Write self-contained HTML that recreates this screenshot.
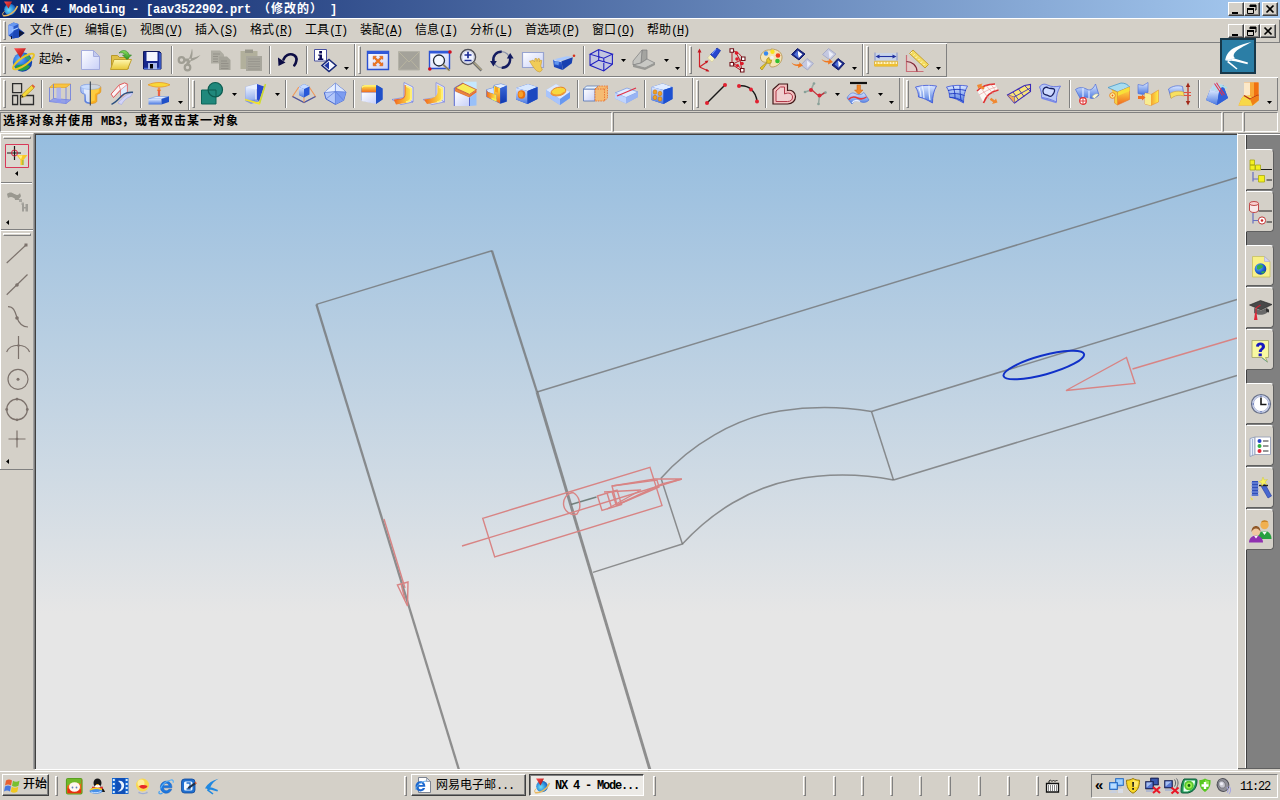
<!DOCTYPE html>
<html lang="zh-CN"><head><meta charset="utf-8"><title>NX 4 - Modeling</title>
<style>
*{box-sizing:border-box;margin:0;padding:0}
html,body{width:1280px;height:800px;overflow:hidden;background:#d4d0c8}
body{position:relative;font-family:"Liberation Sans","Noto Sans CJK SC",sans-serif;font-size:12px;color:#000;line-height:12px}
.a{position:absolute}
svg{position:absolute;overflow:visible}
.title{left:0;top:0;width:1280px;height:18px;background:linear-gradient(90deg,#0a246a,#a6caf0)}
.ttxt{left:20px;top:3px;height:14px;line-height:14px;color:#fff;font-weight:bold;font-size:12px;white-space:pre;font-family:"Liberation Mono","Noto Sans CJK SC",monospace;letter-spacing:-0.2px}
.hl{background:#fff}.sh{background:#808080}.dk{background:#404040}
.grp{border:1px solid;border-color:#fff #808080 #808080 #fff}
.gripv{width:3px;border:1px solid;border-color:#fff #808080 #808080 #fff}
.griph{height:3px;border:1px solid;border-color:#fff #808080 #808080 #fff}
.sepv{width:2px;border-left:1px solid #808080;border-right:1px solid #fff}
.btn{background:#d4d0c8;border:1px solid;border-color:#fff #404040 #404040 #fff;box-shadow:inset -1px -1px 0 #808080,inset 1px 1px 0 #d4d0c8}
.menu span.m{position:absolute;top:24px;height:13px;line-height:13px;white-space:pre}
.menu u{text-decoration:underline}
.lat{font-family:"Liberation Mono",monospace;letter-spacing:-1.2px;font-size:12px}
.sunk{border:1px solid;border-color:#808080 #fff #fff #808080}
.stat{font-weight:bold;font-family:"Liberation Mono","Noto Sans CJK SC",monospace;white-space:pre}
.canvas{left:35px;top:134px;width:1202px;height:635px;border-left:1px solid #404040;border-top:1px solid #404040;background:linear-gradient(180deg,#96bddf 0,#e6e6e6 478px,#e6e6e6 100%)}
.tab{left:1246px;width:28px;height:41px;background:#d4d0c8;border-radius:0 4px 4px 0;border:1px solid;border-color:#fff #606060 #606060 #d4d0c8}
.tbtn{height:22px;top:774px;font-size:12px;line-height:18px;white-space:pre}
</style></head>
<body>
<div class="a title" style=""></div>
<svg style="left:2px;top:1px" width="16" height="16" viewBox="0 0 16 16"><circle cx="8" cy="8.500" r="5.800" fill="url(#gCy)"/>
<path d="M1 14.500c5 1 12-3 14.500-9.500" fill="none" stroke="#e8b860" stroke-width="1.500"/><path d="M1 14.500c-1-1.500 0-3 1.500-4" fill="none" stroke="#e8b860" stroke-width="1"/>
<path d="M2 .5h8l-3.500 7z" fill="url(#gRd)"/></svg>
<div class="a ttxt" style="">NX 4 - Modeling - [aav3522902.prt <span style="letter-spacing:1px">（修改的）</span> ]</div>
<div class="a btn" style="left:1228px;top:2px;width:16px;height:14px"><svg style="left:0;top:0" width="14" height="12" viewBox="0 0 14 12"><path d="M3 9h6v2H3z" fill="#000"/></svg></div>
<div class="a btn" style="left:1244px;top:2px;width:16px;height:14px"><svg style="left:0;top:0" width="14" height="12" viewBox="0 0 14 12"><path d="M5 2h6v5h-1M5 2v2M5 3h6" stroke="#000" stroke-width="1" fill="none"/><path d="M5 2h6v2H5z" fill="#000"/><path d="M2.5 5.5h6v5h-6z" fill="none" stroke="#000"/><path d="M2 5h7v2H2z" fill="#000"/></svg></div>
<div class="a btn" style="left:1262px;top:2px;width:16px;height:14px"><svg style="left:0;top:0" width="14" height="12" viewBox="0 0 14 12"><path d="M3.5 2.5l7 7M10.5 2.5l-7 7" stroke="#000" stroke-width="1.7" fill="none"/></svg></div>
<div class="a hl" style="left:0;top:18px;width:1280px;height:1px"></div>
<div class="a gripv" style="left:3px;top:21px;height:19px"></div>
<svg style="left:8px;top:22px" width="17" height="17" viewBox="0 0 17 17"><path d="M0.500 3l5-2.500l5 1.500v4l6 5l-6 4.500l-6 1l-4-3z" fill="#2858c8"/><path d="M0.500 3l5-2.500l5 1.500l-5 2.500z" fill="#6898f0"/><path d="M.5 3l5 1.500v5l-5 4z" fill="#88b0ff"/><path d="M5.500 9.500l5-3l6 4.500l-6 4.500l-6 1z" fill="#1c48b8"/><path d="M4 8.500l6-2.500" stroke="#a8d0ff" stroke-width="1.200"/><path d="M11 8l5.500 3l-5.500 4z" fill="#101838"/><path d="M3.500 14v3" stroke="#101838" stroke-width="1"/></svg>
<div class="menu"><span class="m" style="left:30px">文件<span class="lat">(<u>F</u>)</span></span><span class="m" style="left:85px">编辑<span class="lat">(<u>E</u>)</span></span><span class="m" style="left:140px">视图<span class="lat">(<u>V</u>)</span></span><span class="m" style="left:195px">插入<span class="lat">(<u>S</u>)</span></span><span class="m" style="left:250px">格式<span class="lat">(<u>R</u>)</span></span><span class="m" style="left:305px">工具<span class="lat">(<u>T</u>)</span></span><span class="m" style="left:360px">装配<span class="lat">(<u>A</u>)</span></span><span class="m" style="left:415px">信息<span class="lat">(<u>I</u>)</span></span><span class="m" style="left:470px">分析<span class="lat">(<u>L</u>)</span></span><span class="m" style="left:525px">首选项<span class="lat">(<u>P</u>)</span></span><span class="m" style="left:592px">窗口<span class="lat">(<u>O</u>)</span></span><span class="m" style="left:647px">帮助<span class="lat">(<u>H</u>)</span></span></div>
<div class="a btn" style="left:1228px;top:24px;width:16px;height:14px"><svg style="left:0;top:0" width="14" height="12" viewBox="0 0 14 12"><path d="M3 9h6v2H3z" fill="#000"/></svg></div>
<div class="a btn" style="left:1244px;top:24px;width:16px;height:14px"><svg style="left:0;top:0" width="14" height="12" viewBox="0 0 14 12"><path d="M5 2h6v5h-1M5 2v2M5 3h6" stroke="#000" stroke-width="1" fill="none"/><path d="M5 2h6v2H5z" fill="#000"/><path d="M2.5 5.5h6v5h-6z" fill="none" stroke="#000"/><path d="M2 5h7v2H2z" fill="#000"/></svg></div>
<div class="a btn" style="left:1260px;top:24px;width:16px;height:14px"><svg style="left:0;top:0" width="14" height="12" viewBox="0 0 14 12"><path d="M3.5 2.5l7 7M10.5 2.5l-7 7" stroke="#000" stroke-width="1.7" fill="none"/></svg></div>
<div class="a sh" style="left:1279px;top:20px;width:1px;height:23px"></div>
<div class="a sh" style="left:0;top:42px;width:1280px;height:1px"></div>
<div class="a hl" style="left:0;top:43px;width:947px;height:1px"></div>
<div class="a " style="left:1220px;top:38px;width:36px;height:36px;background:#2b7ea6;border:2px solid #17384a"><svg style="left:0px;top:0px" width="32" height="32" viewBox="0 0 32 32"><path d="M29.500 2C22 6 15 9.500 12.500 13C11 15.500 11.500 17 13 18C10 19.500 6 20.500 3.300 20C3.800 15 7.500 10 13 7.500C18 5 24 3 29.500 2z" fill="#fff"/>
<path d="M5.500 19.500C9 18 12 18 14 19L26 22.500L25.500 24.300L13 21.300C10 20.500 8 20.500 6 21.500z" fill="#fff"/><path d="M6.500 21L15.500 28.500L14.500 29.500L5 22z" fill="#fff"/><path d="M3.300 20c2 .5 5 0 7-1" stroke="#d0e8f8" stroke-width="1" fill="none"/></svg></div>
<div class="a sh" style="left:354px;top:44px;width:1px;height:32px"></div><div class="a hl" style="left:0px;top:44px;width:1px;height:32px"></div>
<div class="a gripv" style="left:3px;top:46px;height:28px"></div>
<div class="a sh" style="left:685px;top:44px;width:1px;height:32px"></div><div class="a hl" style="left:355px;top:44px;width:1px;height:32px"></div>
<div class="a gripv" style="left:358px;top:46px;height:28px"></div>
<div class="a sh" style="left:862px;top:44px;width:1px;height:32px"></div><div class="a hl" style="left:686px;top:44px;width:1px;height:32px"></div>
<div class="a gripv" style="left:689px;top:46px;height:28px"></div>
<div class="a sh" style="left:946px;top:44px;width:1px;height:32px"></div><div class="a hl" style="left:863px;top:44px;width:1px;height:32px"></div>
<div class="a gripv" style="left:866px;top:46px;height:28px"></div>
<div class="a sh" style="left:0;top:76px;width:947px;height:1px"></div>
<div class="a sh" style="left:947px;top:76px;width:333px;height:1px;background:#d4d0c8"></div>
<div class="a hl" style="left:0;top:77px;width:1278px;height:1px"></div>
<div class="a sepv" style="left:171px;top:46px;height:28px"></div>
<div class="a sepv" style="left:269px;top:46px;height:28px"></div>
<div class="a sepv" style="left:306px;top:46px;height:28px"></div>
<div class="a sepv" style="left:583px;top:46px;height:28px"></div>
<div class="a sh" style="left:188px;top:78px;width:1px;height:32px"></div><div class="a hl" style="left:0px;top:78px;width:1px;height:32px"></div>
<div class="a gripv" style="left:3px;top:80px;height:28px"></div>
<div class="a sh" style="left:692px;top:78px;width:1px;height:32px"></div><div class="a hl" style="left:189px;top:78px;width:1px;height:32px"></div>
<div class="a gripv" style="left:192px;top:80px;height:28px"></div>
<div class="a sh" style="left:899px;top:78px;width:1px;height:32px"></div><div class="a hl" style="left:693px;top:78px;width:1px;height:32px"></div>
<div class="a gripv" style="left:696px;top:80px;height:28px"></div>
<div class="a sh" style="left:1277px;top:78px;width:1px;height:32px"></div><div class="a hl" style="left:903px;top:78px;width:1px;height:32px"></div>
<div class="a gripv" style="left:906px;top:80px;height:28px"></div>
<div class="a sh" style="left:0;top:110px;width:1278px;height:1px"></div>
<div class="a sepv" style="left:41px;top:80px;height:28px"></div>
<div class="a sepv" style="left:140px;top:80px;height:28px"></div>
<div class="a sepv" style="left:285px;top:80px;height:28px"></div>
<div class="a sepv" style="left:353px;top:80px;height:28px"></div>
<div class="a sepv" style="left:577px;top:80px;height:28px"></div>
<div class="a sepv" style="left:644px;top:80px;height:28px"></div>
<div class="a sepv" style="left:765px;top:80px;height:28px"></div>
<div class="a sepv" style="left:1069px;top:80px;height:28px"></div>
<div class="a sepv" style="left:1198px;top:80px;height:28px"></div>
<div class="a sunk" style="left:0;top:112px;width:612px;height:20px"></div>
<div class="a sunk" style="left:613px;top:112px;width:609px;height:20px"></div>
<div class="a sunk" style="left:1223px;top:112px;width:20px;height:20px"></div>
<div class="a sunk" style="left:1244px;top:112px;width:34px;height:20px"></div>
<div class="a stat" style="left:3px;top:116px;height:12px;letter-spacing:1px">选择对象并使用<span style="letter-spacing:-0.2px"> MB3</span>，或者双击某一对象</div>
<div class="a sh" style="left:33px;top:134px;width:1px;height:635px;background:#a0a0a0"></div>
<div class="a sh" style="left:34px;top:133px;width:1px;height:636px"></div>
<div class="a sh" style="left:34px;top:133px;width:1203px;height:1px"></div>
<div class="a hl" style="left:0;top:133px;width:33px;height:1px"></div>
<div class="a griph" style="left:3px;top:136px;width:28px"></div>
<div class="a sh" style="left:1px;top:182px;width:31px;height:1px"></div>
<div class="a hl" style="left:1px;top:183px;width:31px;height:1px"></div>
<div class="a sh" style="left:0px;top:229px;width:33px;height:1px"></div>
<div class="a hl" style="left:0px;top:230px;width:33px;height:1px"></div>
<div class="a griph" style="left:3px;top:233px;width:28px"></div>
<div class="a sh" style="left:0px;top:469px;width:33px;height:1px"></div>
<div class="a hl" style="left:0;top:20px;width:1px;height:22px"></div>
<div class="a hl" style="left:0;top:134px;width:1px;height:335px"></div>
<svg style="left:15px;top:171px" width="3" height="5" viewBox="0 0 3 5"><path d="M3 0v5L0 2.5z" fill="#000"/></svg>
<svg style="left:6px;top:220px" width="3" height="5" viewBox="0 0 3 5"><path d="M3 0v5L0 2.5z" fill="#000"/></svg>
<svg style="left:6px;top:459px" width="3" height="5" viewBox="0 0 3 5"><path d="M3 0v5L0 2.5z" fill="#000"/></svg>
<div class="a canvas" style=""><svg style="left:-36px;top:-135px" width="1280" height="800" viewBox="0 0 1280 800" fill="none" stroke-linecap="butt">
<g stroke="#6e6e6e" stroke-opacity=".74" stroke-width="1.5">
<path d="M316.4 304.4L491.9 250.7"/>
<path d="M537 392L1237 177.5"/>
<path d="M871.5 411.5L1237 299.5"/>
<path d="M893.5 480L1237 375.5"/>
<path d="M871.5 411.5L893.5 480"/>
<path d="M661 478.3L682.4 544L593 572.4"/>
<path d="M661 478.3C690 445 735 418 780 411 C812 406 845 407 871.5 411.5"/>
<path d="M682.4 544C712 512 750 488 792 480 C828 473 862 474 893.5 480"/>
<path d="M571 504.5L596.500 497" stroke="#506058"/>
</g>
<g stroke="#6e6e6e" stroke-opacity=".74">
<path d="M316.4 304.4L459 770" stroke-width="2.300"/>
<path d="M491.900 250.700L537 392" stroke-width="2.300"/>
<path d="M537 392L650 770" stroke-width="2.900"/>
</g>
<g stroke="#d88484" stroke-width="1.400">
<path d="M482.700 518.300L650 467.400L662 505.600L494.700 557z"/>
<path d="M462 546L681.800 479"/>
<path d="M573 492.500a10.500 11 0 1 0 4 21.500c3-4 3.500-9 2-14c-1-3.500-3.500-6-6-7.500z"/>
<path d="M597.500 496L617 490L621.500 504.500L602 510.500z"/>
<path d="M607 493L611.500 507.500M612 491.500L616.500 506"/>
<path d="M612 486L657 480L659 487L617 505z"/>
<path d="M604 492L641 490L607 509"/>
<path d="M617 505L662 484L681.800 479L655 479L612 486"/>
<path d="M384 519L405 588"/>
<path d="M397.400 585L408 582L407.500 606z"/>
<path d="M401 583.500L405 600"/>
<path d="M1237 338L1132.500 369"/>
<path d="M1126.500 357.500L1135 383.500L1066 390.500z"/>
</g>
<ellipse cx="1043.800" cy="365" rx="41.700" ry="9.500" transform="rotate(-15.300 1043.800 365)" stroke="#1030c8" stroke-width="2"/>
</svg></div>
<div class="a hl" style="left:1237px;top:134px;width:1px;height:635px"></div>
<div class="a hl" style="left:35px;top:769px;width:1203px;height:1px"></div>
<div class="a " style="left:1246px;top:135px;width:34px;height:634px;background:#808080;border-left:1px solid #404040;border-bottom:1px solid #606060"></div>
<div class="a hl" style="left:1245px;top:135px;width:1px;height:633px"></div>
<div class="a sh" style="left:1238px;top:133px;width:42px;height:1px"></div>
<div class="a hl" style="left:1238px;top:134px;width:42px;height:1px"></div>
<div class="a sh" style="left:1238px;top:768px;width:8px;height:1px;background:#606060"></div>
<div class="a tab" style="top:149px"><svg style="left:1px;top:8px" width="24" height="24" viewBox="0 0 24 24"><g fill="#f4f020" stroke="#a8a810" stroke-width=".8"><path d="M2 2h4.500v5h-4.500zM2 7h5v5h-5zM7.500 7h5v5h-5zM10.500 17.500h6v6.500h-6z"/></g><path d="M13 11.500h11M18.500 22h5.500" stroke="#202020" stroke-width="1.200"/><path d="M5 14v9.500M5 21h5" stroke="#6870c0" stroke-width="1.200" fill="none"/></svg></div>
<div class="a tab" style="top:191px"><svg style="left:1px;top:8px" width="24" height="24" viewBox="0 0 24 24"><path d="M1.500 3.500v6.500c0 1.500 2 2.500 4.500 2.500s4.500-1 4.500-2.500v-6.500z" fill="#f8e8e8" stroke="#c04848" stroke-width="1"/><ellipse cx="6" cy="3.500" rx="4.500" ry="2" fill="#f8d0d0" stroke="#c04848" stroke-width="1"/>
<path d="M10.500 11h13.500M18.500 22h5.500" stroke="#202020" stroke-width="1.200"/><path d="M5 13v10.500M5 20.500h5" stroke="#6870c0" stroke-width="1.200" fill="none"/><circle cx="14" cy="20.500" r="3.600" fill="#fff" stroke="#c03838" stroke-width="1"/><circle cx="14" cy="20.500" r="1.300" fill="#d02828"/></svg></div>
<div class="a tab" style="top:245px"><svg style="left:1px;top:8px" width="24" height="24" viewBox="0 0 24 24"><path d="M4.500 2.500h12l5.500 5v15.500h-17.500z" fill="#f8f088" stroke="#c8c060" stroke-width=".8"/><path d="M16.500 2.500v5h5.500z" fill="#d0d0f8" stroke="#a8a8d8" stroke-width=".6"/>
<circle cx="12.500" cy="15" r="5.800" fill="url(#gGl)"/><path d="M9 12c2-2 5-2 6 0c0 2-2 2-3 3s-2 1-3 0z" fill="#38b048"/><path d="M13 18c1-1 3-1 4-.5c-1 2-3 3-4 .5z" fill="#38b048"/></svg></div>
<div class="a tab" style="top:287px"><svg style="left:1px;top:8px" width="24" height="24" viewBox="0 0 24 24"><path d="M1.500 9l11-4.500l11.500 4l-11 5.500z" fill="#484848" stroke="#202020" stroke-width=".6"/><path d="M6 12v5c3 2.500 10 2.500 13.500-.5v-5l-6.500 3z" fill="#686868"/><path d="M12.500 9l-4.500 3v6" fill="none" stroke="#d02030" stroke-width="1.100"/><path d="M7 17l-1 7h3.500l-1-7z" fill="#e02838"/><path d="M18 12.500l3 1v3l-3-1z" fill="#303030"/></svg></div>
<div class="a tab" style="top:329px"><svg style="left:1px;top:8px" width="24" height="24" viewBox="0 0 24 24"><path d="M4 2.500h16.500v17h-3l2 4.500l-5.500-4.500h-10z" fill="#f8f8a0" stroke="#a8a870" stroke-width=".9"/><path d="M14 20l5.500 4" stroke="#60a090" stroke-width=".8"/>
<path d="M8 8.500c0-2.500 2-4 4.500-4s4.500 1.500 4.500 4c0 3-3.200 3-3.200 5.500h-3c0-3.500 3-3.500 3-5.500c0-.8-.5-1.300-1.400-1.300s-1.500.6-1.500 1.500zM10.600 15.500h3.200v2.800h-3.200z" fill="#1818c0"/></svg></div>
<div class="a tab" style="top:383px"><svg style="left:1px;top:8px" width="24" height="24" viewBox="0 0 24 24"><circle cx="13" cy="12" r="9.500" fill="#d0d8f0" stroke="#687088" stroke-width="1.200"/><circle cx="13" cy="12" r="7.500" fill="#fff" stroke="#a8b0d0" stroke-width=".8"/><path d="M13 5.500v7h5.500" fill="none" stroke="#181818" stroke-width="1.600"/><path d="M13 3.500v1.500M13 19v1.500M4.500 12h1.500M20 12h1.500" stroke="#4860a8" stroke-width="1"/></svg></div>
<div class="a tab" style="top:425px"><svg style="left:1px;top:8px" width="24" height="24" viewBox="0 0 24 24"><path d="M2 4.500l5-1.500v17.500l-5 2z" fill="#e8eef8" stroke="#8898b8" stroke-width=".8"/><path d="M7 3h15.500v17.500h-15.500z" fill="#fff" stroke="#98a0b8" stroke-width=".9"/><path d="M4.500 5v16" stroke="#a8b8d8" stroke-width="1"/>
<circle cx="11.500" cy="7" r="2" fill="#2848c8"/><circle cx="11.500" cy="12" r="2" fill="#30b040"/><circle cx="11.500" cy="17" r="2" fill="#e02838"/><path d="M15 7h5.500M15 12h5.500M15 17h5.500" stroke="#303030" stroke-width="1.100"/></svg></div>
<div class="a tab" style="top:467px"><svg style="left:1px;top:8px" width="24" height="24" viewBox="0 0 24 24"><path d="M4 5h6v15h-6z" fill="#3050b8"/><path d="M3 7h8M3 10h8M3 13h8M3 16h8M3 19h8" stroke="#88a0e8" stroke-width="1.200"/><path d="M2 21l3 2l-1 1.500z" fill="#f0e038"/>
<path d="M13 10l4-2l6.500 12l-3.500 2z" fill="#4868d0" stroke="#2038a0" stroke-width=".6"/><path d="M11 9.500h9" stroke="#202020" stroke-width="1.400"/>
<path d="M15 1l1.200 3l3.300-.5l-2.300 2.500l1.800 2.800l-3.200-1l-2 2.500l-.2-3.300l-3.100-1.200l3.100-1.200z" fill="#f8f060" stroke="#c8c030" stroke-width=".4"/></svg></div>
<div class="a tab" style="top:509px"><svg style="left:1px;top:8px" width="24" height="24" viewBox="0 0 24 24"><circle cx="16.500" cy="7" r="4.200" fill="#f0b050"/><path d="M13 4.500c1-3 6-3 7.500 0c-2-1-5-1-7.500 0z" fill="#c88020"/><path d="M9.500 21c0-5 3-8 7-8s7 3 7 8z" fill="#28a040"/><path d="M14 13.500l2.500 3.500l2.500-3.500z" fill="#f8f8f8"/>
<circle cx="8" cy="14" r="4" fill="#f0c8a0"/><path d="M3.500 14c0-4 2-6 4.500-6s4.500 2 4.500 6c-1-2-2.500-3.500-4.500-3.500s-3.500 1.500-4.500 3.500z" fill="#905828"/><path d="M1 24.500c0-4 3-7 7-7s7 3 7 7z" fill="#9030b0"/><path d="M6 17.800l2 2.800l2-2.800z" fill="#f8f8f8"/></svg></div>
<div class="a hl" style="left:0;top:771px;width:1280px;height:1px"></div>
<div class="a btn tbtn" style="left:2px;width:47px"><svg style="left:2px;top:2px" width="16" height="16" viewBox="0 0 16 16"><path d="M1 3.500c2-1.500 4-1.500 6 0l-1 5c-2-1.500-4-1.500-6 0z" fill="#e86030"/><path d="M8 3.800c2 1.300 4 1.300 6.500 0l-1 5c-2.500 1.300-4.500 1.300-6.500 0z" fill="#78c030"/><path d="M0 9.500c2-1.500 4-1.500 6 0l-1 5c-2-1.500-4-1.500-6 0z" fill="#4878e0"/><path d="M6.800 9.800c2 1.300 4 1.300 6.500 0l-1 5c-2.500 1.300-4.500 1.300-6.500 0z" fill="#f0c820"/></svg><span class="a" style="left:20px;top:3px;line-height:13px;font-weight:500">开始</span></div>
<div class="a gripv" style="left:55px;top:776px;height:20px"></div>
<svg style="left:66px;top:778px" width="16" height="16" viewBox="0 0 16 16"><rect x=".5" y=".5" width="15.500" height="15.500" rx="1.500" fill="#f06818" stroke="#58a020" stroke-width="1.200"/><path d="M1 1h14v5c-5-2-9-2-14 2z" fill="#70b828"/><path d="M1.500 10c3 2 10 3 13.500 1v4h-13.500z" fill="#e83010"/>
<ellipse cx="8.500" cy="9" rx="5.500" ry="4.800" fill="#fff8f0"/><circle cx="6.500" cy="9.500" r=".9" fill="#6080c0"/><circle cx="10.500" cy="9.500" r=".9" fill="#6080c0"/></svg>
<svg style="left:89px;top:778px" width="16" height="16" viewBox="0 0 16 16"><ellipse cx="8.500" cy="5" rx="4" ry="4.500" fill="#181818"/><path d="M4 9c-2 2-3 4-3 5h15c0-1-2-4-4-5.500z" fill="#181818"/><ellipse cx="8.500" cy="10" rx="3" ry="3.500" fill="#fff"/><path d="M3.500 8.500c3 1.500 7 1.500 10 0l.5 2c-3 1.500-8 1.500-11 0z" fill="#e02828"/><path d="M7 6h3l-1.500 1.500z" fill="#f8b020"/>
<ellipse cx="7" cy="13" rx="6.500" ry="2.800" fill="#4890e8"/><path d="M1 12c3-2 8-2 12-.5" stroke="#f8d020" stroke-width="1.500" fill="none"/><path d="M2 14c3 1 7 1 10-.5" stroke="#c8e0ff" stroke-width="1" fill="none"/></svg>
<svg style="left:112px;top:778px" width="16" height="16" viewBox="0 0 16 16"><path d="M0 0h16.500v16h-16.500z" fill="#1868d0"/><path d="M3.500 0h9.500v16h-9.500z" fill="#1050b8"/><g fill="#d8ecff"><path d="M.8 1h2v2h-2zM.8 5h2v2h-2zM.8 9h2v2h-2zM.8 13h2v2h-2zM13.700 1h2v2h-2zM13.700 5h2v2h-2zM13.700 9h2v2h-2zM13.700 13h2v2h-2z"/></g>
<path d="M6 3c4-1.500 7 2 6 6c-.8 3-3.500 5-6.500 4.500c3-1.500 4.500-4 3.800-6.500c-.4-1.500-1.500-2.800-3.300-4z" fill="#e8f4ff"/></svg>
<svg style="left:135px;top:778px" width="16" height="16" viewBox="0 0 16 16"><circle cx="7.500" cy="7" r="6.500" fill="#f8d850"/><circle cx="6" cy="5" r="3.500" fill="#fff4b0" opacity=".8"/><path d="M4 8c2-1.500 6-1.500 8.500 0c-1 3.500-7 3.500-8.500 0z" fill="#e82828"/><path d="M4 13.500c2 2 6 2 8 0l1 1.500c-3 1.500-7 1.500-10 0z" fill="#88a0d8" opacity=".7"/></svg>
<svg style="left:158px;top:778px" width="16" height="16" viewBox="0 0 16 16"><path d="M13.900 9.800H5.400c.2 1.800 1.400 2.900 3 2.900c1.100 0 2-.5 2.600-1.400h2.700c-.9 2.400-2.900 3.900-5.400 3.900c-3.400 0-5.900-2.500-5.900-6s2.500-6 5.900-6c3.600 0 5.800 2.800 5.600 6.600zM5.500 7.700h5.500c-.3-1.500-1.400-2.400-2.800-2.400s-2.400.9-2.700 2.400z" fill="#1c78e0" fill-rule="evenodd" stroke="#1458b8" stroke-width=".5"/><path d="M1.500 13c-1.500 2.500 0 3.500 3 2.200" stroke="#48a0f0" stroke-width="1.300" fill="none"/><path d="M2.500 10.500c2-4.500 6-7.500 10.500-8.500c2-.3 2.800.8 2 2.700" stroke="#58b0f8" stroke-width="1.200" fill="none"/></svg>
<svg style="left:181px;top:778px" width="16" height="16" viewBox="0 0 16 16"><rect x=".5" y="1" width="13.500" height="14" rx="3" fill="#2070d0" stroke="#104898" stroke-width=".8"/><rect x="3" y="3.500" width="8.500" height="9" rx="1.500" fill="#f0f8ff"/><path d="M5.500 5h3.500v6h-3.500" fill="none" stroke="#2070d0" stroke-width="1.300"/><path d="M7 9l6.500-4.500l1.500 1.500l-6.500 4.500l-2 .3z" fill="#203048"/><path d="M13.500 4.500l1-.8l1.500 1.500l-1 .8z" fill="#e85828"/></svg>
<svg style="left:204px;top:778px" width="16" height="16" viewBox="0 0 16 16"><path d="M14.500 .8C8.500 2.500 3.500 5.500 1 10.500c2.500.3 4.500-.3 5.500-1.500C7.500 6 10.500 3 14.500 .8z" fill="#2088e0"/><path d="M2.500 10c2-1 4.500-1 6 -.2l5.500 2.200l-.6 1.500l-5.400-1.600c-1.500-.4-3-.3-4 .3z" fill="#2088e0"/><path d="M4 11.300l5.500 4.200l-1 1l-5.500-4z" fill="#2088e0"/></svg>
<div class="a gripv" style="left:404px;top:776px;height:20px"></div>
<div class="a btn tbtn" style="left:411px;width:115px"><svg style="left:3px;top:2px" width="16" height="16" viewBox="0 0 16 16"><path d="M3.500 .5h8l4 4v11h-12z" fill="#fff" stroke="#707888" stroke-width=".9"/><path d="M11.500 .5v4h4z" fill="#d0d8e8" stroke="#707888" stroke-width=".6"/>
<g transform="translate(-1.500 1.500) scale(.85)"><path d="M13.900 9.800H5.400c.2 1.800 1.400 2.900 3 2.900c1.100 0 2-.5 2.600-1.400h2.700c-.9 2.400-2.900 3.900-5.400 3.900c-3.400 0-5.900-2.500-5.900-6s2.500-6 5.900-6c3.600 0 5.800 2.800 5.600 6.600zM5.500 7.700h5.500c-.3-1.500-1.400-2.400-2.800-2.400s-2.400.9-2.700 2.400z" fill="#1c68d0" fill-rule="evenodd"/></g><path d="M.5 12.500c2-5 6-8 11-8.500" stroke="#58a8f0" stroke-width="1" fill="none"/></svg><span class="a" style="left:24px;top:4px;line-height:13px">网易电子邮<span class="lat">...</span></span></div>
<div class="a tbtn" style="left:529px;width:115px;border:1px solid;border-color:#404040 #fff #fff #404040;box-shadow:inset 1px 1px 0 #808080;background:#eceae6"><svg style="left:4px;top:3px" width="16" height="16" viewBox="0 0 16 16"><circle cx="8" cy="8.500" r="5.800" fill="url(#gCy)"/>
<path d="M1 14.500c5 1 12-3 14.500-9.500" fill="none" stroke="#e8b860" stroke-width="1.500"/><path d="M1 14.500c-1-1.500 0-3 1.500-4" fill="none" stroke="#e8b860" stroke-width="1"/>
<path d="M2 .5h8l-3.500 7z" fill="url(#gRd)"/></svg><span class="a lat" style="left:25px;top:5px;line-height:13px;font-weight:bold">NX 4 - Mode...</span></div>
<div class="a gripv" style="left:653px;top:776px;height:20px"></div>
<div class="a gripv" style="left:803px;top:776px;height:20px"></div>
<div class="a gripv" style="left:833px;top:776px;height:20px"></div>
<div class="a gripv" style="left:861px;top:776px;height:20px"></div>
<div class="a gripv" style="left:890px;top:776px;height:20px"></div>
<div class="a gripv" style="left:919px;top:776px;height:20px"></div>
<div class="a gripv" style="left:948px;top:776px;height:20px"></div>
<div class="a gripv" style="left:978px;top:776px;height:20px"></div>
<div class="a gripv" style="left:1007px;top:776px;height:20px"></div>
<div class="a gripv" style="left:1036px;top:776px;height:20px"></div>
<div class="a gripv" style="left:1065px;top:776px;height:20px"></div>
<svg style="left:1045px;top:778px" width="16" height="16" viewBox="0 0 16 16"><path d="M1.500 5.500h12v8.500h-12z" fill="#fff" stroke="#101010" stroke-width="1.300"/><path d="M3 8h9M3 10h9M3 12h9" stroke="#101010" stroke-width="1" stroke-dasharray="1 1"/><path d="M4 5.500v-2.500l1.500-1l1.500 1.500l1.500-1.500l1.500 1.500l1.500-1.500l1 1" fill="none" stroke="#101010" stroke-width=".9"/></svg>
<div class="a sunk" style="left:1091px;top:774px;width:187px;height:24px"></div>
<span class="a" style="left:1095px;top:779px;font-weight:bold;font-size:15px;line-height:12px">«</span>
<svg style="left:1109px;top:778px" width="16" height="16" viewBox="0 0 16 16"><path d="M6.500 .5h8v7h-8z" fill="#58a8f0" stroke="#2868c0" stroke-width=".8"/><path d="M8.500 8h4v1.500h-4z" fill="#a8b8d0"/><path d="M7.500 1.500h6v5h-6z" fill="#a0d0ff"/>
<path d="M.5 4.500h8v7h-8z" fill="#4898f0" stroke="#2060b8" stroke-width=".8"/><path d="M1.500 5.500h6v5h-6z" fill="#b8dcff"/><path d="M2.500 12h4v1.500h-4zM1 13.500h7v1.500h-7z" fill="#c8d0e0"/><path d="M9 11h5v4h-5z" fill="#d8e0f0" opacity=".8"/></svg>
<svg style="left:1126px;top:778px" width="16" height="16" viewBox="0 0 16 16"><path d="M7 .5c2 1.200 4 1.700 6.500 1.700c0 6-1.500 10.500-6.500 13c-5-2.500-6.500-7-6.500-13c2.500 0 4.500-.5 6.500-1.700z" fill="#f8d828" stroke="#987808" stroke-width="1"/><path d="M7 2c1.500.9 3 1.300 5 1.400c0 2-.3 4-1 5.600h-4z" fill="#fff088" opacity=".7"/><path d="M6.200 4h1.800l-.3 5h-1.200zM6.200 10h1.800v1.800h-1.800z" fill="#181818"/></svg>
<svg style="left:1145px;top:778px" width="16" height="16" viewBox="0 0 16 16"><path d="M5.500 0h8v7h-8z" fill="#283878" stroke="#182050" stroke-width=".7"/><path d="M6.500 1h6v5h-6z" fill="#3858b0"/><path d="M.5 3.500h8v7.500h-8z" fill="#283878" stroke="#182050" stroke-width=".7"/><path d="M1.500 4.500h6v5.500h-6z" fill="#5878d0"/><path d="M1.500 4.500h6l-6 5z" fill="#a8c0f0"/><path d="M1 12h7v2h-7z" fill="#b0b8d0"/>
<path d="M8 9l7 6M15 9l-7 6" stroke="#e81828" stroke-width="2.200"/></svg>
<svg style="left:1164px;top:778px" width="16" height="16" viewBox="0 0 16 16"><path d="M.5 2.500h8v7.500h-8z" fill="#283878" stroke="#182050" stroke-width=".7"/><path d="M1.500 3.500h6v5.500h-6z" fill="#5878d0"/><path d="M1.500 3.500h6l-6 5z" fill="#a8c0f0"/><path d="M1 11h7v2h-7z" fill="#b0b8d0"/>
<path d="M10.500 1.500c1.500 2 1.500 5 0 7M12.500 .5c2 2.500 2 6.500 0 9" fill="none" stroke="#505860" stroke-width=".9"/><path d="M7.500 9.500l7 6M14.500 9.500l-7 6" stroke="#e81828" stroke-width="2.200"/></svg>
<svg style="left:1181px;top:778px" width="16" height="16" viewBox="0 0 16 16"><path d="M3 1h11.500c1 0 1.500.5 1.500 1.500c0 7-3 11-9 12.500h-5.500c-1 0-1.500-.5-1.500-1.500c0-6 1-10 3-12.500z" fill="#209858" stroke="#0c5838" stroke-width="1"/><path d="M4 2.500h10c0 6-2.500 9.500-7.500 11h-4c0-5 .5-8.500 1.500-11z" fill="#e8fff0"/>
<circle cx="8" cy="7.500" r="4.800" fill="#58c830"/><circle cx="8" cy="7.500" r="3" fill="#a0f050"/><circle cx="8" cy="7.500" r="1.400" fill="#186018"/></svg>
<svg style="left:1199px;top:778px" width="16" height="16" viewBox="0 0 16 16"><path d="M6 .5c2 1 3.500 1.500 5.500 1.500c.5 5-1 9-5.500 12c-4.500-3-6-7-5.500-12c2 0 3.500-.5 5.500-1.500z" fill="#58c820"/><path d="M6 2c1.500.8 2.800 1 4 1.200c.2 2-.2 4-1 5.800h-3z" fill="#a0e860" opacity=".8"/><path d="M4.800 4h2.400v2.300h2.300v2.400h-2.300v2.300h-2.400v-2.300h-2.300v-2.400h2.300z" fill="#fff"/></svg>
<svg style="left:1216px;top:778px" width="16" height="16" viewBox="0 0 16 16"><ellipse cx="7" cy="7" rx="5.800" ry="6.500" transform="rotate(-20 7 7)" fill="#909098" stroke="#505058" stroke-width="1"/><ellipse cx="6" cy="6.500" rx="3.200" ry="3.800" transform="rotate(-20 6 6.500)" fill="#c8c8d0" stroke="#686870" stroke-width=".7"/><circle cx="5.500" cy="5.800" r="1.500" fill="#f0f0f8"/>
<path d="M11 9c1.500 2 1.500 4 0 5.500M13 8c2 2.500 2 5.500 0 8" fill="none" stroke="#a8a8e0" stroke-width="1.100"/></svg>
<span class="a lat" style="left:1240px;top:781px;line-height:13px">11:22</span>
<svg style="left:12px;top:48px" width="24" height="24" viewBox="0 0 24 24"><circle cx="10.500" cy="14" r="9.700" fill="url(#gGl)"/>
<path d="M3 19c3-3 9-3 15-1c-2 5-11 7-15 1z" fill="#28a040"/>
<path d="M12 6c3 0 7 3 7 6c-3 1-7-1-7-6z" fill="#38b050" opacity=".8"/>
<ellipse cx="11.500" cy="13.500" rx="12.500" ry="3.800" transform="rotate(-35 11.500 13.500)" fill="none" stroke="#e8c428" stroke-width="2"/>
<path d="M2 .3h12l-5.500 9.700z" fill="url(#gRd)"/></svg>
<svg style="left:79px;top:48px" width="24" height="24" viewBox="0 0 24 24"><path d="M2.5 2.5h12l6 6v13h-18z" fill="url(#gW)" stroke="#a4acdc" stroke-width="1"/>
<path d="M14.5 2.5v6h6z" fill="#c4ccf0" stroke="#a4acdc" stroke-width="1"/></svg>
<svg style="left:109px;top:48px" width="24" height="24" viewBox="0 0 24 24"><path d="M2.5 7.5h6l2 2h9v11h-17z" fill="#e0c048" stroke="#b89828"/>
<path d="M1.500 21.5l3.500-10h17.500l-4 10z" fill="url(#gY)" stroke="#c0a030"/>
<path d="M10 5c3-4 9-3 10 2h2.500l-4.500 4.500l-4.500-4.500h2.800c-1-2-4-3-6.300-2z" fill="url(#gGn)" stroke="#2a8020" stroke-width=".6"/></svg>
<svg style="left:140px;top:48px" width="24" height="24" viewBox="0 0 24 24"><path d="M3.500 3.500h16l1.500 1.500v16h-17.500z" fill="#18288c" stroke="#10185c"/>
<path d="M20 5v15.500h-16" fill="none" stroke="#4468d8" stroke-width="1.4"/>
<path d="M6.500 4h11v9h-11z" fill="#f4f6ff"/>
<path d="M8 15h9v6h-9z" fill="#a8b8e8"/><path d="M10 16h3v4.500h-3z" fill="#000"/></svg>
<svg style="left:177px;top:48px" width="24" height="24" viewBox="0 0 24 24"><g fill="none" stroke="#a09e94" stroke-width="2.200"><circle cx="4.500" cy="12" r="2.800"/><circle cx="10.500" cy="19.500" r="2.800"/></g>
<path d="M15 .5c1.500 5 0 12-3.500 16.500l-2.500-1.500c3-4 5-9 6-15z" fill="#a09e94"/>
<path d="M23.500 7c-4 5-10 7-16.500 6.500l.5-3c5 .5 10-.5 16-3.500z" fill="#a09e94"/><circle cx="13" cy="11.500" r="1" fill="#d4d0c8"/></svg>
<svg style="left:209px;top:48px" width="24" height="24" viewBox="0 0 24 24"><path d="M2 2.500h9l4 4v9h-13z" fill="#aeaca2"/><path d="M10 8.500h8l3.500 3.500v10h-11.500z" fill="#a6a49a"/>
<path d="M4 6h7M4 8.500h5M4 11h5M4 13.500h5M12 13h6M12 15.500h7.500M12 18h7.500M12 20.500h7.500" stroke="#8e8c84" stroke-width=".8"/></svg>
<svg style="left:239px;top:48px" width="24" height="24" viewBox="0 0 24 24"><path d="M1.500 3h17v18h-17z" fill="#b2b09c"/><path d="M6 1.500h8v3.500h-8z" fill="#9a988c"/>
<path d="M7 8h16v15h-16z" fill="#a8a69c"/><path d="M9 11h12M9 13.500h12M9 16h12M9 18.500h12M9 21h12" stroke="#94928a" stroke-width=".8"/></svg>
<svg style="left:275px;top:48px" width="24" height="24" viewBox="0 0 24 24"><path d="M8.500 11.500C10 7.500 14 5.500 17.500 6.500C20.500 7.500 22 10 21.300 13C21 14.800 20.300 16.200 19.300 17.300" fill="none" stroke="#0c0c44" stroke-width="2.600" stroke-linecap="round"/><path d="M3 9.500l7.500 5l-7 3.500z" fill="#0c0c44"/></svg>
<svg style="left:312px;top:48px" width="24" height="24" viewBox="0 0 24 24"><path d="M2.500 1.500h12v11.500h-12z" fill="#fff" stroke="#4850a0" stroke-width="1"/>
<path d="M7.200 3h2.800v2.400h-2.800zM6.300 6.400h3.700v4.200h1.300v1.400h-5.300v-1.400h1.400v-2.800h-1.100z" fill="#0c0c58"/>
<path d="M17 11.500l7 6l-7 6l-7-6z" fill="#fff" stroke="#182878" stroke-width="1.600"/>
<path d="M17 13.500l-4.800 4l4.800 4z" fill="#2038a8"/><path d="M17 13.500l4.800 4l-4.800 4z" fill="#f4f6ff"/></svg>
<svg style="left:366px;top:48px" width="24" height="24" viewBox="0 0 24 24"><path d="M1.500 3.500h21v18h-21z" fill="url(#gW)" stroke="#2a50d0" stroke-width="1.400"/><path d="M1.500 3h21v3h-21z" fill="#3058d8"/>
<g transform="translate(12 13) scale(.8) translate(-12 -14)"><path d="M6 8l4 0l-1.200 1.200l3.200 3.200l3.200-3.200l-1.200-1.200l4 0l0 4l-1.200-1.200l-3.200 3.200l3.200 3.200l1.200-1.200l0 4l-4 0l1.200-1.200l-3.200-3.200l-3.200 3.200l1.200 1.200l-4 0l0-4l1.200 1.200l3.200-3.200l-3.200-3.200l-1.200 1.200z" fill="#f07818" stroke="#d04808" stroke-width=".6"/></g></svg>
<svg style="left:397px;top:48px" width="24" height="24" viewBox="0 0 24 24"><path d="M1.500 3.500h21v18.500h-21z" fill="#a4a29a" stroke="#b4b2a8"/><path d="M2 4l10 10l10-10M2 21.500l8-9M22 21.500l-8-9" fill="none" stroke="#b8b4a0" stroke-width="1"/></svg>
<svg style="left:428px;top:48px" width="24" height="24" viewBox="0 0 24 24"><path d="M1.500 3.500h20v17h-20z" fill="url(#gW)" stroke="#2a50d0" stroke-width="1.400"/><path d="M1.500 3h20v2.500h-20z" fill="#3058d8"/>
<circle cx="11" cy="12.500" r="5.500" fill="#f4f8ff" stroke="#202838" stroke-width="1.300"/><path d="M15 16.500l6.500 6" stroke="#b0a070" stroke-width="2.200"/><path d="M15 16.500l6.500 6" stroke="#505860" stroke-width=".8"/>
<circle cx="22" cy="4" r="1.800" fill="#d01020"/><circle cx="1.800" cy="21" r="1.800" fill="#d01020"/></svg>
<svg style="left:459px;top:48px" width="24" height="24" viewBox="0 0 24 24"><circle cx="9" cy="9" r="7.500" fill="#eef2ff" stroke="#505058" stroke-width="1.500"/><circle cx="9" cy="9" r="6" fill="none" stroke="#c8c8d8" stroke-width=".8"/>
<path d="M5.500 7h7M9 3.800v6.400M5.500 12.500h7" stroke="#1c2c98" stroke-width="1.700"/>
<path d="M14.500 14.500l8 8" stroke="#707070" stroke-width="2.600"/><path d="M15 14.500l7.500 7.500" stroke="#d8c890" stroke-width="1"/></svg>
<svg style="left:490px;top:48px" width="24" height="24" viewBox="0 0 24 24"><circle cx="11.700" cy="11.700" r="8" fill="none" stroke="#8890a8" stroke-width="1.200"/>
<path d="M11.700 19.700A8 8 0 0 0 19.900 10" fill="none" stroke="#141c60" stroke-width="2.400"/><path d="M16.800 10.500h6.800l-3.400-5.500z" fill="#141c60"/>
<path d="M11.700 3.700A8 8 0 0 0 3.500 13.500" fill="none" stroke="#141c60" stroke-width="2.400"/><path d="M0 13h6.800l-3.400 5.500z" fill="#141c60"/></svg>
<svg style="left:521px;top:49px" width="24" height="24" viewBox="0 0 24 24"><path d="M1.500 3.500h21v15h-21z" fill="url(#gW)" stroke="#98a4d0" stroke-width="1.200"/>
<path d="M10 12l2-1l1.500 2l.5-3.500l1.500 0l.5 3l1-3l1.500.3l-.2 3.200l1.200-2l1.300.5l-1 5.500l1.500 4l-2.500 2l-3-1c-3-3-5-6-7.300-10z" fill="#f0cc58" stroke="#c89830" stroke-width=".6"/></svg>
<svg style="left:553px;top:48px" width="24" height="24" viewBox="0 0 24 24"><path d="M1 11.200l12.700-3l6.100.5l-11.200 4.100z" fill="#a8c8ff"/><path d="M0 11.700l8.600 1.600l1.100 8.600l-8.700-3z" fill="url(#gBd)"/><path d="M8.600 13.300l11.200-4.100l-1 6.100l-9.100 6.600z" fill="#1840b0"/><path d="M.8 12.200l7.500 1.400" stroke="#c8dcff" stroke-width="1"/><path d="M1.500 13.500c2-.5 3.500 0 4.500 1l-.5 3c-1.500-1-3-1.200-4-1z" fill="#78b0ff" opacity=".7"/>
<circle cx="21" cy="7.700" r="1.300" fill="#d83018"/></svg>
<svg style="left:590px;top:48px" width="24" height="24" viewBox="0 0 24 24"><path d="M0 6.200l8.700-4.600l13.700 4.600v10.100l-8.600 6.600l-13.800-5.600z" fill="#b8c0f0" opacity=".6"/>
<path d="M0 6.200l8.700-4.600l13.700 4.600l-8.600 4zM0 6.200v11.100l13.800 5.600l8.600-6.600v-10.100M13.800 10.200v12.700M8.700 1.600v10.600l-8.700 5.100M8.700 12.200l13.700 4.100" fill="none" stroke="#2020c0" stroke-width="1.100"/></svg>
<svg style="left:632px;top:48px" width="24" height="24" viewBox="0 0 24 24"><path d="M1 13l9-11l5 0l0 9l8 4l-10 5l-12-3z" fill="#b4b4b0"/><path d="M10 2l5 0l0 9l-6 4z" fill="#a4a4a0" stroke="#808080" stroke-width=".7"/>
<path d="M1 13l9-11l-1 13l-8 2z" fill="#c4c4c0" stroke="#808080" stroke-width=".7"/><path d="M1 17l8-2l6-4l8 4l-10 5z" fill="#c8c8c4" stroke="#808080" stroke-width=".7"/><path d="M1 17l12 3l10-5v2l-10 5l-12-3z" fill="#989894"/></svg>
<svg style="left:697px;top:48px" width="24" height="24" viewBox="0 0 24 24"><path d="M2.500 2v17M2.500 19l8-5.500M2.500 19l9 4" stroke="#d02028" stroke-width="1.200" fill="none"/><path d="M2.500 .5l-2 4h4zM11.500 12.500l-3.800 .5l2 2.500zM12.500 23.500l-4-.2l1.200-2.600z" fill="#c01820"/>
<path d="M10.500 10l4.500 4l3-3.500l-4.500-4z" fill="#f8f4c0" stroke="#c8c090" stroke-width=".5"/>
<path d="M13.500 6.500l4.500 4l5.500-8l-3.500-2.500z" fill="#2848d0" stroke="#1028a0" stroke-width=".7"/><path d="M15 6l4-5" stroke="#88a8ff" stroke-width="1.200"/></svg>
<svg style="left:727px;top:48px" width="24" height="24" viewBox="0 0 24 24"><path d="M5 2.500v14l10 6.500M5 2.500c5 1 9 4 11 8.500M5 16.500l11-5.500M5 16.500c4 0 8 1 10 6.500M9 5l4 7l2 11" fill="none" stroke="#b81828" stroke-width="1"/>
<g fill="#fff" stroke="#701018" stroke-width="1.100"><path d="M3 .8h3.500v3.500h-3.500zM3 14.500h3.500v3.500h-3.500zM14.500 9h3.500v3.500h-3.500zM13.500 20.500h3.500v3.500h-3.500z"/></g>
<g fill="#e01828"><circle cx="9.500" cy="5" r="1.800"/><circle cx="10" cy="11" r="1.800"/><circle cx="15" cy="15.500" r="1.800"/><circle cx="10.500" cy="17.500" r="1.600"/></g></svg>
<svg style="left:759px;top:48px" width="24" height="24" viewBox="0 0 24 24"><path d="M12 1c7 0 11.500 4 11 9c-.5 5-5 9-10 9c-2 0-2.500-1.500-2-3c.5-1.500-1-2.500-3-2c-3 .8-6-.5-6.500-4c-.5-4 4-9 10.500-8z" fill="#f4e4b4" stroke="#b89858" stroke-width=".9"/>
<circle cx="7" cy="5.500" r="2.200" fill="#3888f0"/><circle cx="13.500" cy="3.800" r="2.200" fill="#f8e020"/><circle cx="19" cy="7.500" r="2.300" fill="#f04020"/><circle cx="18.500" cy="13" r="2.300" fill="#30c030"/><circle cx="13" cy="9.500" r="1.800" fill="#f0f0f0"/>
<path d="M1 20l7-6c-1-2 0-4 2-4.500l.5 2.500l2 0l-.5 3c-2 .5-3 .5-4 0l-5 7z" fill="#e8c828" stroke="#a08818" stroke-width=".7"/></svg>
<svg style="left:790px;top:48px" width="24" height="24" viewBox="0 0 24 24"><path d="M7.500 .5l7.500 5.500l-6 6l-7.500-5.500z" fill="#1c2c8c" stroke="#101868"/><path d="M7.500 2.500l5 3.700l-4 4z" fill="#fff"/><path d="M7.500 2.500l-3.500 4l4.500 3.700z" fill="#5070d8"/>
<path d="M17 10.500l6.500 5l-6 6.500l-6.500-5z" fill="#c4c8e0" stroke="#a8acc8"/><path d="M17 12.500l4 3.200l-3.700 4z" fill="#eceef8"/>
<path d="M1.500 14.500c2 2 5 2.500 8 1.500l-.5-2l4 3.500l-5 2.500l.3-2c-3 .5-5.500-1-6.800-3.500z" fill="#f07820"/></svg>
<svg style="left:821px;top:48px" width="24" height="24" viewBox="0 0 24 24"><path d="M7.500 .5l7.500 5.500l-6 6l-7.500-5.500z" fill="#c4c8e0" stroke="#a8acc8"/><path d="M7.500 2.500l5 3.700l-4 4z" fill="#eceef8"/>
<path d="M17 10.500l6.500 5l-6 6.500l-6.500-5z" fill="#1c2c8c" stroke="#101868"/><path d="M17 12.500l4 3.200l-3.700 4z" fill="#fff"/><path d="M17 12.500l-3.500 4l4 3.200z" fill="#5070d8"/>
<path d="M0.500 11c2 2 5 2.500 8 1.500l-.5-2l4 3.500l-5 2.500l.3-2c-3 .5-5.500-1-6.800-3.500z" fill="#f07820"/></svg>
<svg style="left:874px;top:48px" width="24" height="24" viewBox="0 0 24 24"><path d="M.5 5h23v7.500h-23z" fill="#c4d4f0" opacity=".8"/><path d="M1 4.500v8M23 4.500v8" stroke="#8890c0" stroke-width="1"/><path d="M3 8.500h18" stroke="#2030a0" stroke-width="1.100"/><path d="M1.500 8.500l4-2v4zM22.500 8.500l-4-2v4z" fill="#2030a0"/>
<path d="M.5 13.300h23v4.700h-23z" fill="#fff4c0" stroke="#d8a828" stroke-width=".8"/><path d="M.5 16h23v2.300h-23z" fill="#f0c030"/><path d="M3 13.500v2.500M6 13.500v2M9 13.500v2.500M12 13.500v2M15 13.500v2.500M18 13.500v2M21 13.500v2.500" stroke="#e0b030" stroke-width="1"/></svg>
<svg style="left:905px;top:49px" width="24" height="24" viewBox="0 0 24 24"><path d="M1.500 6L1.500 22.500L18.500 22.500z" fill="#ecc8c8" opacity=".6"/><path d="M1.500 6v16.500h17" fill="none" stroke="#c87078" stroke-width="1.200"/><path d="M1.500 12.500c5.500 0 10.500 4 10.500 10" fill="none" stroke="#802838" stroke-width="1.200"/>
<path d="M4.500 4.500l3.500-3.500l15.500 14.500l-3.500 3.500z" fill="#f4dc60" stroke="#c09828" stroke-width=".9"/><path d="M7 3l-1.500 1.500M9.500 5.500l-1 1M12 7.500l-1.500 1.500M14.500 10l-1 1M17 12.500l-1.500 1.500M19.500 15l-1 1" stroke="#fff" stroke-width=".8"/></svg>
<svg style="left:11px;top:82px" width="24" height="24" viewBox="0 0 24 24"><g fill="none" stroke="#2c2c2c" stroke-width="1.300"><path d="M1.600 1.600h9v9h-9zM1.600 13.500h5v9h-5zM9.500 13.500h13v9h-13z"/></g>
<path d="M10.500 15.500l1-3.500l9-8.500l2.500 2.500l-9 8.500z" fill="#f4d838" stroke="#b89018" stroke-width=".7"/><path d="M20.500 3.500l1.200-1.200l2.500 2.500l-1.200 1.200z" fill="#e06038"/><path d="M10.500 15.500l.6-2l1.500 1.400z" fill="#202020"/></svg>
<svg style="left:48px;top:82px" width="24" height="24" viewBox="0 0 24 24"><path d="M1.500 5.500l4-3.500h17l-4.500 3.500z" fill="#f8c440" stroke="#e8a828" stroke-width=".8"/>
<path d="M1.500 5.500v14l16.500 2v-16M18 21.500l4.500-3.500v-16M1.500 19.500l4-3l17 1.500M5.500 2v14.500" fill="none" stroke="#6878e0" stroke-width=".8"/>
<path d="M8.500 5.500h4.500v15.500l-4.500-.6z" fill="#a8b0f0" opacity=".85"/><path d="M1.500 19.500l4-3l17 1.500l-4.500 3.500z" fill="#8090f0" opacity=".75"/></svg>
<svg style="left:79px;top:82px" width="24" height="24" viewBox="0 0 24 24"><path d="M11.300 2.500c-5 0-9.500 1-9.500 2.500v4c0 1.500 1 2.500 3 3c.8.300 1 1 1 2v5c0 1.500 2 2.500 5.500 2.500z" fill="url(#gBv)" stroke="#5878d8" stroke-width=".7"/>
<path d="M5 5c2 1 4 1.500 6.300 1.500v14c-2.500 0-4-.800-4.300-2v-5c0-1.500-.5-2-2-2.500z" fill="#eef4ff" opacity=".8"/>
<path d="M11.300 2.500c5.500 0 10.500 1 10.500 2.500v4c0 1.500-1 2.500-3 3c-.8.300-1 1-1 2v5c0 1.500-2 2.500-6.500 2.500z" fill="#f8b020" stroke="#e09018" stroke-width=".7"/>
<path d="M11.300 6.500c3.500 0 6.500-.300 8.500-1v3.500c0 1-1 1.800-2.500 2.200c-1 .300-1.500 1-1.500 2.300v5l-4.500 1.500z" fill="#ffe058" opacity=".6"/>
<ellipse cx="11.500" cy="4.800" rx="10" ry="2.600" fill="#c8dcff" opacity=".85" stroke="#88a8e8" stroke-width=".6"/>
<path d="M11.300 -.5v24" stroke="#283848" stroke-width="1"/></svg>
<svg style="left:110px;top:82px" width="24" height="24" viewBox="0 0 24 24"><path d="M1.100 12.100L9 3.100L14.600 .9L17.600 2.200L17.300 10L10.500 15.500L10.500 8L3.500 15.500z" fill="#faf4f6" stroke="#e05858" stroke-width="1"/>
<path d="M10.500 8L17.300 2.400L17.300 10L10.500 15.500z" fill="#dcecff" stroke="#e07070" stroke-width=".6"/><path d="M3.500 15.500l7-7.500M10.500 8l-1.500-4.900" stroke="#e06868" stroke-width=".7" fill="none"/>
<path d="M8 21C12 16.500 16 12 23 10.500L20.500 14.500C16.500 15.500 13.500 19 11.500 22.500z" fill="#d4d4f8" stroke="#a0a8e8" stroke-width=".6"/>
<path d="M1.500 22.300C7 20 10 14.500 14 12C17 10.300 20 10 23 10.300" fill="none" stroke="#2c5080" stroke-width="1.400"/></svg>
<svg style="left:147px;top:82px" width="24" height="24" viewBox="0 0 24 24"><path d="M1 2.800c3-1.500 7-2.300 11-2.300s8 .8 11 2.300c-3 1.500-7 2.300-11 2.300s-8-.8-11-2.300z" fill="#f8d838" stroke="#e89828" stroke-width=".8"/>
<path d="M12 5.500v9" stroke="#f08868" stroke-width="2.400"/><path d="M12 5l-2.200 4h4.400z" fill="#f09040"/><path d="M12 8v6" stroke="#e84830" stroke-width="1.200"/>
<path d="M1.500 17l7.500-2.500h13l-7.500 2.500z" fill="#e0ecff" stroke="#6890e0" stroke-width=".6"/><path d="M1.500 17h13v5.500h-13z" fill="url(#gBv)"/><path d="M14.500 17l7.500-2.500v5.500l-7.500 2.500z" fill="#2050c8"/></svg>
<svg style="left:200px;top:82px" width="24" height="24" viewBox="0 0 24 24"><path d="M1.500 8h14.500v14h-14.500z" fill="#20887c" stroke="#0c6458" stroke-width="1"/><circle cx="15.300" cy="7.700" r="7.200" fill="#20887c" stroke="#0c5c50" stroke-width="1.200"/><path d="M8 8h8v7" fill="none" stroke="#0c5c50" stroke-width="1"/></svg>
<svg style="left:243px;top:82px" width="24" height="24" viewBox="0 0 24 24"><path d="M23 2l-6 20l-15-4.500z" fill="#f8e848" opacity=".9"/>
<path d="M2.500 5l11.500-3v15.500l-11.500 1.500z" fill="url(#gW)" stroke="#98a8e0" stroke-width=".6"/><path d="M2.500 5l11.500-3l7 2.500l-9 3z" fill="#e8f0ff"/><path d="M14 2l7 2.500l-5 15l-2-2z" fill="#2848d0"/><path d="M2.500 19l11.500-1.500l2 2l-8 2.500z" fill="#8098e8"/><path d="M2.500 5l9.500 2.500v13l-9.500-1.500z" fill="url(#gBv)" opacity=".55"/>
<path d="M22.500 2l-6 19.500" stroke="#c8d838" stroke-width="1.500"/><path d="M2 17.500l15 4.500" stroke="#f0e030" stroke-width="1.800"/></svg>
<svg style="left:292px;top:82px" width="24" height="24" viewBox="0 0 24 24"><path d="M12 20.500l-11.500-6l6-9h11l6 9z" fill="none" stroke="#f09858" stroke-width="1.100"/><path d="M.5 14.500l11.500 6l11.500-6" fill="none" stroke="#4058b0" stroke-width="1.300"/><path d="M12 20.500v-6" stroke="#f09858" stroke-width="1"/>
<path d="M7 5l5-3l5.500 2.500v8l-5.500 3l-5-2.500z" fill="#2858d8"/><path d="M7 5l5-3l5.500 2.500l-5.500 2.500z" fill="#c8dcff"/><path d="M7 5l5 2v8.500l-5-2.500z" fill="url(#gBv)"/></svg>
<svg style="left:323px;top:82px" width="24" height="24" viewBox="0 0 24 24"><path d="M12.400 1.300l10.600 8.700l-2.400 8.300l-8.200 4.100l-9.400-5.400l-1.700-6.400z" fill="#b4c8fa" stroke="#4868d0" stroke-width="1"/>
<path d="M12.400 1.300l10.600 8.700l-10.600-.5z" fill="#dce8ff"/><path d="M12.400 9.500l10.600.5l-2.400 8.300l-8.200 4.100z" fill="#7c9cf0"/><path d="M12.400 1.300l-11.100 9.300l11.100-1.100z" fill="#e8f0ff"/>
<path d="M12.400 1.300v21.100M1.300 10.600l11.100-1.100l10.600.5M3 17l9.400-7.500l8.200 8.800" fill="none" stroke="#5878d8" stroke-width=".7"/></svg>
<svg style="left:360px;top:82px" width="24" height="24" viewBox="0 0 24 24"><path d="M1.500 6c0-2 1.500-3 3.500-3h11.500l6 3.500v11l-6 4l-15-3z" fill="#2858d8"/>
<path d="M1.500 10.500v-4.500c0-2 1.500-3 3.500-3h11.500c-.5 1-.5 4-.5 7.500z" fill="url(#gO)"/><path d="M2 5.500c.5-1.200 1.500-1.700 3-1.700h11" stroke="#fff480" stroke-width="1.200" fill="none"/>
<path d="M1.500 10.500h14.500v11.500l-14.500-3z" fill="url(#gW)"/><path d="M16 10.500c0-3 0-5.500.5-7.500l6 3.500v11l-6.500 4.500z" fill="#2050c8"/></svg>
<svg style="left:391px;top:82px" width="24" height="24" viewBox="0 0 24 24"><path d="M13 .5l9 4.500v15l-9-4.500z" fill="#e8ecff" stroke="#7080e0" stroke-width=".7"/><path d="M1 17.500l12-2l9 4.500l-12 2.500z" fill="#e8ecff" stroke="#7080e0" stroke-width=".7"/>
<path d="M14 3l7 3.500v9c0 3-3 5-7 5.500l-9 1.500l-2-4.500l7-1c3-.5 4-2 4-5z" fill="url(#gOh)"/><path d="M15 4l5 2.500v9c0 2-2 4-5 4.500" fill="none" stroke="#fff080" stroke-width="1.600"/><path d="M3 18l7-1c3-.5 4-2 4-5v-9" fill="none" stroke="#e85820" stroke-width=".8"/></svg>
<svg style="left:422px;top:82px" width="24" height="24" viewBox="0 0 24 24"><path d="M14 .5l8.500 4.500v15l-8.500-4.500z" fill="#d8dcf8" stroke="#8088e0" stroke-width=".7"/><path d="M1 17.500l13-2l8.500 4.500l-12.500 2.500z" fill="#e0e4fc" stroke="#8088e0" stroke-width=".7"/>
<path d="M15.500 3l5.500 3v9c0 3-3 5-7 5.500l-9 1.500l-3-4.500l7-1c4-1 6.500-3 6.500-7z" fill="url(#gOh)"/><path d="M17 5l3 1.500v9c0 2-2 4-5 4.500" fill="none" stroke="#fff080" stroke-width="1.600"/></svg>
<svg style="left:453px;top:82px" width="24" height="24" viewBox="0 0 24 24"><path d="M10.600 -.3h13v9h-13z" fill="#c4e8ff"/><path d="M1.300 6l8.700-5" stroke="#6070d0" stroke-width="1"/>
<path d="M2.400 6l7.600-4.700l13.500 6.400l-7 4.700z" fill="#f8ec58" stroke="#c85030" stroke-width=".8"/><path d="M2.400 6.500l14.100 6.500v2.500l-14.100-6.500z" fill="#f08838" stroke="#c85030" stroke-width=".5"/><path d="M16.500 13l7-5v2.500l-7 5z" fill="#e87030"/>
<path d="M1.300 9.500l15.200 6v8.500h-15.200z" fill="url(#gW)"/><path d="M16.500 15.500l7-5v13l-7 .5z" fill="#98c0f8"/><path d="M1.300 6v18M16.500 15.500v8.500" stroke="#5868d0" stroke-width="1"/></svg>
<svg style="left:485px;top:82px" width="24" height="24" viewBox="0 0 24 24"><path d="M1.600 7.700L8.700 5.800L9 3.400L16 1.900L21.600 3.800L21.600 19.400L15.300 21.400L1.600 14.800z" fill="#2860d8" stroke="#4878e0" stroke-width=".6"/>
<path d="M9 3.400L16 1.900L21.600 3.800L15.300 6.200z" fill="#e4eeff"/><path d="M1.600 7.700L8.700 5.800L9 12L2.800 10.100z" fill="#d4e4ff"/>
<path d="M9 3.900L15.300 6.200V21.400L11.400 19.400V12.800L9 12z" fill="url(#gO)"/><path d="M1.600 7.700L2.800 10.100L9 12L11.400 12.800V19.400L1.600 14.800z" fill="url(#gOh)"/><path d="M10 4.500l3 1.200v5l-3-1z" fill="#f8a020"/>
<path d="M6.500 15.500L11.400 17.300v2.100L6.500 17.200z" fill="#f4f050"/><path d="M15.300 6.200L21.600 3.800V19.400L15.300 21.400z" fill="url(#gBd)"/></svg>
<svg style="left:515px;top:82px" width="24" height="24" viewBox="0 0 24 24"><path d="M1 6l12-4l9.500 3v12l-10 5l-11.500-4.500z" fill="#2858d8"/><path d="M1 6l12-4l9.500 3l-10 4z" fill="#d8e8ff"/><path d="M1 6l11.500 3v13l-11.500-4.500z" fill="url(#gBv)"/><path d="M12.500 9l10-4v12l-10 5z" fill="#1c48c0"/>
<ellipse cx="6.500" cy="12.500" rx="3.800" ry="4.200" fill="#e87010"/><ellipse cx="5.800" cy="12.300" rx="2.300" ry="3" fill="#f8a028"/></svg>
<svg style="left:546px;top:82px" width="24" height="24" viewBox="0 0 24 24"><path d="M0 8l10-6l14 8v6l-10 7l-14-9z" fill="#90b4f8"/><path d="M0 8l10-6l14 8l-10 7z" fill="#dce8ff"/><path d="M0 8l14 9v6l-14-9z" fill="#a8c4fc"/><path d="M14 17l10-7v6l-10 7z" fill="#6898f0"/>
<ellipse cx="12.500" cy="9.500" rx="7.500" ry="4.200" transform="rotate(-12 12.500 9.500)" fill="#f8d840" stroke="#e88020" stroke-width=".9"/><path d="M5 11c2 3 9 3.500 14-1" fill="none" stroke="#f09838" stroke-width="1.600"/></svg>
<svg style="left:583px;top:82px" width="24" height="24" viewBox="0 0 24 24"><path d="M.5 7l3-3h12v12l-3 3h-12z" fill="#b8d8f8"/><path d="M.5 7h11.500v12h-11.500z" fill="url(#gW)" stroke="#5070b0" stroke-width=".8"/><path d="M.5 7l3-3h12l-3.500 3z" fill="#e8f4ff" stroke="#5070b0" stroke-width=".7"/>
<path d="M12 7l3.500-3h9v12l-3 3h-9.500z" fill="#f8b868" opacity=".9"/><path d="M12 7l3.500-3h9v12l-3 3h-9.500zM21.500 7v12M12 7h9.500l3-3" fill="none" stroke="#e86828" stroke-width=".8" stroke-dasharray="1.500 1"/></svg>
<svg style="left:614px;top:82px" width="24" height="24" viewBox="0 0 24 24"><path d="M1 11l12-5l11 4v5l-12 6.500l-11-5z" fill="#88a8f0"/><path d="M1 11l12-5l11 4l-12 5.500z" fill="#e0ecff" stroke="#7090e0" stroke-width=".6"/><path d="M1 11l11 4.500v6l-11-5z" fill="#c0d4fc"/><path d="M12 15.500l12-5.500v5l-12 6.500z" fill="#98b4f4"/>
<path d="M3 14l19-8" stroke="#e03048" stroke-width="1.300"/></svg>
<svg style="left:650px;top:82px" width="24" height="24" viewBox="0 0 24 24"><path d="M1.500 5l11-3.500l10 3.500v12l-9 5l-12-4z" fill="#2858d8"/><path d="M1.500 5l11-3.500l10 3.500l-9 3z" fill="#e0ecff"/><path d="M1.500 5l12 3v14l-12-4z" fill="url(#gBv)"/><path d="M13.500 8l9-3v12l-9 5z" fill="#1c50d0"/>
<g fill="#f0a020" stroke="#c87010" stroke-width=".5"><ellipse cx="5" cy="10" rx="1.900" ry="2.200"/><ellipse cx="10" cy="11.500" rx="1.900" ry="2.200"/><ellipse cx="5" cy="15.500" rx="1.900" ry="2.200"/><ellipse cx="10" cy="17" rx="1.900" ry="2.200"/></g></svg>
<svg style="left:704px;top:82px" width="24" height="24" viewBox="0 0 24 24"><path d="M3 21l18-18" stroke="#181818" stroke-width="1.500"/><circle cx="3" cy="21" r="2" fill="#e02030"/><circle cx="21" cy="3" r="2" fill="#e02030"/></svg>
<svg style="left:736px;top:82px" width="24" height="24" viewBox="0 0 24 24"><path d="M3 4c9-1.500 17 5 18 15.500" fill="none" stroke="#181818" stroke-width="1.500"/><circle cx="3" cy="4" r="2" fill="#e02030"/><circle cx="15" cy="7.500" r="1.900" fill="#e02030"/><circle cx="21" cy="19.500" r="2" fill="#e02030"/></svg>
<svg style="left:772px;top:82px" width="24" height="24" viewBox="0 0 24 24"><path d="M1 7.500l6-5.500h8.500v6.500c4-1 8 1.500 8 6c0 4-3 7.500-8 7.500h-14.500z" fill="#f4c0c0" stroke="#401818" stroke-width="1.200"/><path d="M4 9l4.500-4h4v7c4-2 8-.5 8 3c0 3-2 4.500-5 4.500h-11.500z" fill="#f0d0d0" stroke="#b03848" stroke-width="1"/></svg>
<svg style="left:803px;top:82px" width="24" height="24" viewBox="0 0 24 24"><path d="M2 10l6-2l3-7M16.500 13.500l6-3M16.500 13.500l-1 8.500" fill="none" stroke="#98a8a0" stroke-width="1.600"/><path d="M8 8c3 0 5 5.500 8.500 5.500c3 0 4-3 6-3" fill="none" stroke="#c03038" stroke-width="1.300"/>
<circle cx="8" cy="8" r="2" fill="#d82838"/><circle cx="16.500" cy="13.500" r="2" fill="#d82838"/><circle cx="11" cy="1.500" r="1.300" fill="#88a098"/><circle cx="2" cy="10" r="1.300" fill="#88a098"/><circle cx="22.500" cy="10.500" r="1.300" fill="#88a098"/><circle cx="15.500" cy="22" r="1.300" fill="#88a098"/></svg>
<svg style="left:846px;top:82px" width="24" height="24" viewBox="0 0 24 24"><path d="M4 1h17" stroke="#101010" stroke-width="2.200"/><path d="M11 3h3.500v5h2.500l-4.200 4.500l-4.300-4.500h2.500z" fill="#f08828" stroke="#d06010" stroke-width=".5"/>
<path d="M1 16c2-4 5-6 8-4.500c3 1.500 6 2 9-1l5 7.500c-3 3-6 3-9 1.500c-3-1.500-6-1-8 2.500z" fill="url(#gBv)" stroke="#4068d8" stroke-width=".6"/><path d="M2.500 17.500c3-3 6-3 9-1.500c3 1.500 6 1 9-1" fill="none" stroke="#e83838" stroke-width="1.500"/><path d="M6 21c2-3 5-3 8-1.500" fill="none" stroke="#e8f0ff" stroke-width="1.300"/></svg>
<svg style="left:914px;top:82px" width="24" height="24" viewBox="0 0 24 24"><path d="M1.500 5c7-2 14-2 21-1c-3 5-4 11-4 17c-5-3-9-5-14-6c0-4-1-7-3-10z" fill="url(#gBv)" stroke="#3850d8" stroke-width=".8"/><path d="M8 3.800c1.500 4 2 8 2 12.500M15 3.500c0 5 0 9 1 14.500" fill="none" stroke="#e8f0ff" stroke-width="1.200"/><path d="M5 6c1.500 3 2 6 2 9" stroke="#fff" stroke-width="1.300" opacity=".7" fill="none"/></svg>
<svg style="left:945px;top:82px" width="24" height="24" viewBox="0 0 24 24"><path d="M1.500 5c7-2 14-2 21-1c-3 5-4 11-4 17c-5-3-9-5-14-6c0-4-1-7-3-10z" fill="url(#gBv)" stroke="#3850d8" stroke-width=".8"/><path d="M8 3.800c1.500 4 2 8 2 12.500M15 3.500c0 5 0 9 1 14.500M3 8.500c6-1.500 12-1.500 18 0M4 12c5-1 10-.5 15.500 1.500M4.500 15.500c5 0 9 1 14 4" fill="none" stroke="#1c38c0" stroke-width=".9"/></svg>
<svg style="left:975px;top:82px" width="24" height="24" viewBox="0 0 24 24"><path d="M2 9c5-5 12-7 18-7l3.500 6c-6 1-12 5-15 13z" fill="#fbf8f4" stroke="#d8c8c8" stroke-width=".5"/><path d="M2 9c5-5 12-7 18-7M8.500 21c3-8 9-12 15-13" fill="none" stroke="#e03030" stroke-width="1.600"/><path d="M6 6l8 11M11 3.500l8 9M16 2.500l5 6.500M4 13c5-3 10-6 17-8" fill="none" stroke="#e89090" stroke-width=".6"/>
<path d="M2 3l5.500-1.500l-1.200 1.800l3.500 2.500l-1.500 2l-3.500-2.500l-1.300 1.700z" fill="#f08830"/><path d="M22.500 20.500l-5.500 1.500l1.200-1.800l-3.500-2.500l1.500-2l3.500 2.500l1.300-1.700z" fill="#f08830"/></svg>
<svg style="left:1007px;top:82px" width="24" height="24" viewBox="0 0 24 24"><path d="M.5 13l17-9.500l6-1v7l-16 11.500z" fill="#f8e478" stroke="#3828b8" stroke-width="1.100"/><path d="M.5 13l6.500 2l.5 6M7 15l16.500-9M17.500 3.500l6 6M6 10l5.500 8M11.500 7l5.500 7.500" fill="none" stroke="#4030b8" stroke-width=".9"/><path d="M.5 13l6.500 2l.5 6z" fill="#f0a858"/></svg>
<svg style="left:1038px;top:82px" width="24" height="24" viewBox="0 0 24 24"><path d="M1.500 5c2-3 5-3.500 8-2c4 2 8 2 13 1c-3 5-4.500 10-4 16c-5-2.500-10-4-15-4.500c.5-4-.5-7-2-10.500z" fill="#b8c8f8" stroke="#5868e0" stroke-width=".8"/>
<path d="M5.500 7c1.500-2 3.500-2 5-1c2 1 4 0 5.500 1c1.500 1.500 0 4-1.500 6c-1 1.500-3 1.500-4.500.5c-1.500-1-3.500-.5-4.500-2c-1-1.500-.8-3 0-4.500z" fill="#d0dcff" stroke="#182060" stroke-width="1.300"/><path d="M3.500 16l15 4.500" stroke="#7888e8" stroke-width="1.400"/></svg>
<svg style="left:1075px;top:82px" width="24" height="24" viewBox="0 0 24 24"><path d="M.5 7.500c4-3 8-2 12 0c3 1.500 6-1 8-5.500l3.500 11c-3 3-6 4-9 3c-3-1-6-1.500-9.500 1z" fill="url(#gBv)" stroke="#4868d8" stroke-width=".7"/><path d="M8 6v10.500M14 8.500v8" stroke="#e0ecff" stroke-width="1.200"/>
<path d="M17 15c2-3 5-4 6.500-2.500l-4 4z" fill="#f8f8d8" stroke="#a8a880" stroke-width=".5"/><circle cx="8" cy="19" r="3.300" fill="#fff" stroke="#e03030" stroke-width="1.200"/><path d="M5 19h6M8 16v6" stroke="#e03030" stroke-width=".9"/></svg>
<svg style="left:1107px;top:82px" width="24" height="24" viewBox="0 0 24 24"><path d="M1 5.500l13-4.500c4 0 7 1.500 8.500 4l-12 5z" fill="#a8dcf0" stroke="#4898c8" stroke-width=".8"/><path d="M10.500 10l12-5v12.500l-12 5.500z" fill="url(#gO)" stroke="#e87828" stroke-width=".6"/><path d="M10.500 10l12-5v4l-12 5z" fill="#f8e038"/>
<path d="M4.500 7.500l6 2.500v13l-3-2v-6.500" fill="#f8d040" stroke="#e08828" stroke-width=".6"/><circle cx="5.500" cy="13.500" r="2.800" fill="#fff0a0" stroke="#e88820" stroke-width="1"/><circle cx="5.500" cy="13.500" r=".9" fill="#e86020"/></svg>
<svg style="left:1136px;top:82px" width="24" height="24" viewBox="0 0 24 24"><path d="M2 2.500l5 1l5-3v10l-5 2l-5-1z" fill="url(#gBv)" stroke="#4868d8" stroke-width=".6"/>
<path d="M9 11l6 1.500l7.500-4.500v12l-7.500 3.500l-6-1.500z" fill="url(#gOh)" stroke="#e89030" stroke-width=".6"/><path d="M9 11l6 1.500v11l-6-1.500z" fill="#f8ec90"/>
<path d="M2 14h4v-1.500l3.500 3l-3.500 3v-1.500h-4z" fill="#f07020"/></svg>
<svg style="left:1168px;top:82px" width="24" height="24" viewBox="0 0 24 24"><path d="M.5 7c4-3 9-4 14-2.500l1.500 9c-5-1.500-9-.5-13 2.500z" fill="url(#gBv)" stroke="#4868d8" stroke-width=".7"/><path d="M2 11.500c4-2.500 9-3 13.500-1.500l.5 4c-5-1.500-9-.5-13 2.500z" fill="#f8e060" stroke="#d8a838" stroke-width=".6"/>
<path d="M20 3v18" stroke="#b83020" stroke-width="1.300"/><path d="M20 .5l-2.200 4.500h4.400zM20 23.500l-2.200-4.500h4.400z" fill="#a02818"/><path d="M16 10.500h7M16 13.500h7" stroke="#e05040" stroke-width="1.100"/></svg>
<svg style="left:1205px;top:82px" width="24" height="24" viewBox="0 0 24 24"><path d="M1 18l4-10l5-7l8 2l5 13l-11 7z" fill="#2858d8"/><path d="M5 8l5-7l8 2l-4 7z" fill="#b8dcf0" stroke="#f0f4ff" stroke-width=".5"/><path d="M1 18l4-10l9 2l-2 13z" fill="url(#gBv)"/><path d="M14 10l4-7l5 13l-11 7z" fill="#3060d8"/>
<path d="M9.500 1.500l8 12M11.500 .8l8 12" stroke="#e83048" stroke-width="1.100"/><path d="M14 3l8 3" stroke="#a8e0e8" stroke-width="1.500"/></svg>
<svg style="left:1237px;top:82px" width="24" height="24" viewBox="0 0 24 24"><path d="M7 .5h14.500v18l-6 5h-14l3-7l2.500-3z" fill="#f89020"/><path d="M7 .5h6v13l-6 .5z" fill="#fce8c8"/><path d="M13 .5h4v15l-4-2z" fill="#f8a838"/><path d="M17 .5h4.500v18l-4.500-3z" fill="#f07010"/>
<path d="M1.500 23.500l3-7l2.500-3l6 .5l4 2l4.500 3l-6 4.500z" fill="#f8d848"/><path d="M7 13.500l6 3.500l8.500-4" fill="none" stroke="#b02818" stroke-width="1.300"/><path d="M13 17l2.500 6.500l6-5v-5.500z" fill="#f08018"/></svg>
<svg style="left:66px;top:59px" width="5" height="3" viewBox="0 0 5 3"><path d="M0 0h5L2.5 3z" fill="#000"/></svg>
<svg style="left:344px;top:67px" width="5" height="3" viewBox="0 0 5 3"><path d="M0 0h5L2.5 3z" fill="#000"/></svg>
<svg style="left:621px;top:59px" width="5" height="3" viewBox="0 0 5 3"><path d="M0 0h5L2.5 3z" fill="#000"/></svg>
<svg style="left:664px;top:59px" width="5" height="3" viewBox="0 0 5 3"><path d="M0 0h5L2.5 3z" fill="#000"/></svg>
<svg style="left:675px;top:67px" width="5" height="3" viewBox="0 0 5 3"><path d="M0 0h5L2.5 3z" fill="#000"/></svg>
<svg style="left:852px;top:67px" width="5" height="3" viewBox="0 0 5 3"><path d="M0 0h5L2.5 3z" fill="#000"/></svg>
<svg style="left:936px;top:67px" width="5" height="3" viewBox="0 0 5 3"><path d="M0 0h5L2.5 3z" fill="#000"/></svg>
<svg style="left:178px;top:101px" width="5" height="3" viewBox="0 0 5 3"><path d="M0 0h5L2.5 3z" fill="#000"/></svg>
<svg style="left:232px;top:93px" width="5" height="3" viewBox="0 0 5 3"><path d="M0 0h5L2.5 3z" fill="#000"/></svg>
<svg style="left:275px;top:93px" width="5" height="3" viewBox="0 0 5 3"><path d="M0 0h5L2.5 3z" fill="#000"/></svg>
<svg style="left:682px;top:101px" width="5" height="3" viewBox="0 0 5 3"><path d="M0 0h5L2.5 3z" fill="#000"/></svg>
<svg style="left:835px;top:93px" width="5" height="3" viewBox="0 0 5 3"><path d="M0 0h5L2.5 3z" fill="#000"/></svg>
<svg style="left:878px;top:93px" width="5" height="3" viewBox="0 0 5 3"><path d="M0 0h5L2.5 3z" fill="#000"/></svg>
<svg style="left:889px;top:101px" width="5" height="3" viewBox="0 0 5 3"><path d="M0 0h5L2.5 3z" fill="#000"/></svg>
<svg style="left:1267px;top:101px" width="5" height="3" viewBox="0 0 5 3"><path d="M0 0h5L2.5 3z" fill="#000"/></svg>
<svg width="0" height="0" style="left:0;top:0"><defs>
<linearGradient id="gB" x1="0" y1="0" x2="1" y2="1"><stop offset="0" stop-color="#e6f0ff"/><stop offset="1" stop-color="#3a6ae0"/></linearGradient>
<linearGradient id="gBv" x1="0" y1="0" x2="0" y2="1"><stop offset="0" stop-color="#dce8ff"/><stop offset="1" stop-color="#4a78e0"/></linearGradient>
<linearGradient id="gBd" x1="0" y1="0" x2="0" y2="1"><stop offset="0" stop-color="#3a68d8"/><stop offset="1" stop-color="#1038b0"/></linearGradient>
<linearGradient id="gO" x1="0" y1="0" x2="0" y2="1"><stop offset="0" stop-color="#fff04a"/><stop offset="1" stop-color="#f0661e"/></linearGradient>
<linearGradient id="gOh" x1="0" y1="0" x2="1" y2="0"><stop offset="0" stop-color="#f0661e"/><stop offset="1" stop-color="#fff04a"/></linearGradient>
<linearGradient id="gY" x1="0" y1="0" x2="0" y2="1"><stop offset="0" stop-color="#fff8b0"/><stop offset="1" stop-color="#e8c838"/></linearGradient>
<linearGradient id="gW" x1="0" y1="0" x2="1" y2="1"><stop offset="0" stop-color="#ffffff"/><stop offset="1" stop-color="#c8d0f8"/></linearGradient>
<radialGradient id="gGl" cx="0.35" cy="0.35" r="0.8"><stop offset="0" stop-color="#6ab8ff"/><stop offset="0.6" stop-color="#1858d0"/><stop offset="1" stop-color="#0a2c90"/></radialGradient>
<linearGradient id="gRd" x1="0" y1="0" x2="1" y2="1"><stop offset="0" stop-color="#ff5050"/><stop offset="1" stop-color="#a00808"/></linearGradient>
<linearGradient id="gGn" x1="0" y1="0" x2="0" y2="1"><stop offset="0" stop-color="#8ce060"/><stop offset="1" stop-color="#2a9020"/></linearGradient>
<radialGradient id="gCy" cx="0.4" cy="0.55" r="0.7"><stop offset="0" stop-color="#70e0f8"/><stop offset="0.6" stop-color="#2888d8"/><stop offset="1" stop-color="#1840a0"/></radialGradient>
</defs></svg><span class="a" style="left:39px;top:53px;line-height:13px;white-space:pre">起始</span><svg style="left:0;top:0" width="36" height="480" viewBox="0 0 36 480">
<path d="M5.500 144.500h23v23h-23z" fill="#dcd8d0" stroke="#d83858" stroke-width="1"/>
<path d="M14.500 146v14M7 153h14" stroke="#181818" stroke-width="1.200"/><circle cx="14.500" cy="153" r="3" fill="none" stroke="#d02040" stroke-width="1"/>
<path d="M16.500 155h11l-4 5v5h-3v-5z" fill="#f8c828"/><path d="M18 155.500h4.500l-1.500 4z" fill="#fff080"/><path d="M23.500 160v5h-1.200v-5z" fill="#98b840"/>
<path d="M7 194c2-2 5-2 7 0s5 1 6-1l1 3c-1 3-4 4-7 2c-2-1.500-4-1.500-6 0z" fill="#9a9890"/><path d="M13 194c3 0 6 2 6 6l-4 0c0-2-1-3-3-3z" fill="#9a9890"/>
<path d="M19 199h3v3h-3zM21.500 202.500h2.500v2.500h-2.500z" fill="#a8a6a0"/><path d="M22 204h2v7.500h-2zM25.500 204h2.500v7.500h-2.500zM22 207h6v1.500h-6z" fill="#a09e98"/>
<g stroke="#7c726c" stroke-width="1.200" fill="none">
<path d="M6.700 263L26 245"/><path d="M6.700 294.700L27.500 274.500"/>
<path d="M8 306.700c6 0 7 5 9 11s5 9 11 9.300"/>
<path d="M18.500 336v23M6.600 352c4-9 19-9 23 0"/>
<circle cx="18" cy="379.300" r="10"/><circle cx="17" cy="409.500" r="10.300"/>
<path d="M17 430.500v17M8.500 439h17"/></g>
<g fill="#7c726c"><path d="M24.500 243.500h3v3h-3z"/><circle cx="17" cy="285" r="1.800"/><circle cx="17" cy="318" r="1.800"/><circle cx="18.500" cy="345.500" r="1.300"/><circle cx="18" cy="379.300" r="1.500"/>
<circle cx="17" cy="399.200" r="1.400"/><circle cx="17" cy="419.800" r="1.400"/><circle cx="6.700" cy="409.500" r="1.400"/><circle cx="27.300" cy="409.500" r="1.400"/><circle cx="17" cy="439" r="1.300"/></g>
</svg>
</body></html>
